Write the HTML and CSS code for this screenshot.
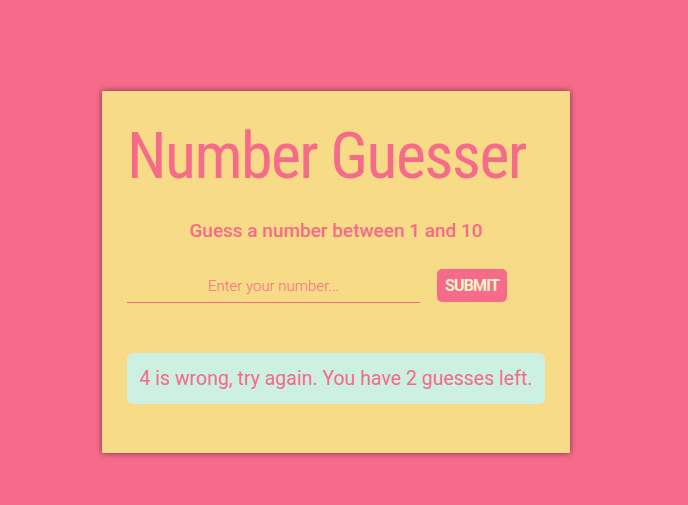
FILE: index.html
```html
<!DOCTYPE html>
<html>
<head>
<meta charset="utf-8">
<link rel="stylesheet" href="styles.css">
</head>
<body>
<div class="card">
  <h1 class="title">Number Guesser</h1>
  <p class="subtitle">Guess a number between 1 and 10</p>
  <div class="form-row">
    <input class="guess-input" type="text" placeholder="Enter your number...">
    <button class="submit-btn">SUBMIT</button>
  </div>
  <div class="message">4 is wrong, try again. You have 2 guesses left.</div>
</div>
</body>
</html>
```
FILE: styles.css
```css
html, body {
  margin: 0;
  padding: 0;
}
body {
  background: #f76b8a;
  width: 688px;
  height: 505px;
  overflow: hidden;
  font-family: "Roboto", "Liberation Sans", sans-serif;
  color: #f76b8a;
}
.card {
  box-sizing: border-box;
  width: 468px;
  height: 362px;
  margin: 91px 0 0 102px;
  padding: 0 25px;
  background: #f8db86;
  box-shadow: 0 0 6px rgba(0, 0, 0, 0.55);
  display: flex;
  flex-direction: column;
}
.title {
  margin: 30px 0 0 0;
  font-family: "Liberation Sans Narrow", "Roboto Condensed", "Roboto", sans-serif;
  font-size: 64px;
  font-weight: 400;
  line-height: 72px;
  letter-spacing: -1.6px;
  white-space: nowrap;
}
.subtitle {
  margin: 26px 0 0 0;
  text-align: center;
  font-size: 19px;
  font-weight: 500;
  line-height: 24px;
}
.form-row {
  display: flex;
  align-items: flex-end;
  gap: 17px;
  margin-top: 26px;
}
.guess-input {
  width: 293px;
  height: 34px;
  box-sizing: border-box;
  border: none;
  border-bottom: 1px solid #f76b8a;
  background: transparent;
  text-align: center;
  font-family: inherit;
  font-size: 15px;
  font-weight: 300;
  color: #f76b8a;
  padding: 0;
  outline: none;
}
.guess-input::placeholder {
  color: #f76b8a;
  opacity: 1;
}
.submit-btn {
  width: 70px;
  height: 33px;
  margin-bottom: 1px;
  border: none;
  border-radius: 5px;
  background: #f76b8a;
  color: #fcf3ca;
  font-family: inherit;
  font-size: 16px;
  font-weight: 700;
  letter-spacing: -0.8px;
  padding: 0;
}
.message {
  margin-top: 50px;
  height: 51px;
  border-radius: 6px;
  background: #ccf0e2;
  display: flex;
  align-items: center;
  justify-content: center;
  font-size: 19.5px;
  font-weight: 400;
}
```
